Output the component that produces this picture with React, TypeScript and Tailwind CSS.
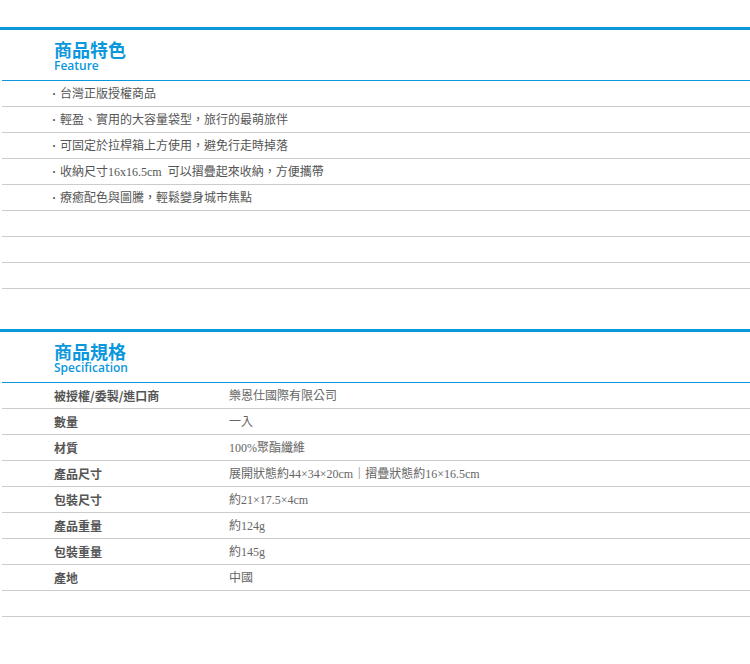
import React from 'react';

const features = [
    '台灣正版授權商品',
    '輕盈、實用的大容量袋型，旅行的最萌旅伴',
    '可固定於拉桿箱上方使用，避免行走時掉落',
    '收納尺寸16x16.5cm  可以摺疊起來收納，方便攜帶',
    '療癒配色與圖騰，輕鬆變身城市焦點',
    '',
    '',
    '',
];

const specs: [string, string][] = [
    ['被授權/委製/進口商', '樂恩仕國際有限公司'],
    ['數量', '一入'],
    ['材質', '100%聚酯纖維'],
    ['產品尺寸', '展開狀態約44×34×20cm｜摺疊狀態約16×16.5cm'],
    ['包裝尺寸', '約21×17.5×4cm'],
    ['產品重量', '約124g'],
    ['包裝重量', '約145g'],
    ['產地', '中國'],
    ['', ''],
];

const bodyFont = { fontFamily: '"Liberation Serif", "Noto Sans CJK TC", serif' };

const SectionHead = ({ zh, en }: { zh: string; en: string }) => (
    <div className="border-t-[3px] border-[#0a97dc]">
        <div className="ml-[2px] h-[51px] border-b border-[#0a97dc] pl-[52px] pt-[9px] flex flex-col gap-[1px]">
            <div className="text-[18px] leading-[20px] font-bold text-[#0a97dc]" style={{ fontFamily: '"Noto Sans CJK TC", sans-serif' }}>{zh}</div>
            <div className="text-[12px] leading-[12px] font-semibold text-[#0a97dc]" style={{ fontFamily: '"Open Sans", "Noto Sans", sans-serif' }}>{en}</div>
        </div>
    </div>
);

export default function App() {
    return (
        <div className="w-[750px] h-[664px] bg-white pt-[27px] overflow-hidden">
            <SectionHead zh="商品特色" en="Feature" />
            <div className="ml-[2px]">
                {features.map((f, i) => (
                    <div key={i} className="h-[26px] border-b border-[#cccccc] flex items-center pl-[50px] text-[12px] text-[#555555]" style={bodyFont}>
                        {f && <span className="whitespace-pre"><span className="mr-[4px] font-bold">·</span>{f}</span>}
                    </div>
                ))}
            </div>

            <div className="mt-[40px]">
                <SectionHead zh="商品規格" en="Specification" />
                <div className="ml-[2px]">
                    {specs.map(([k, v], i) => (
                        <div key={i} className="h-[26px] border-b border-[#cccccc] grid grid-cols-[227px_1fr] items-center text-[12px]" style={bodyFont}>
                            <span className="pl-[52px] font-bold text-[#555555]" style={{ fontFamily: '"Noto Sans CJK TC", sans-serif' }}>{k}</span>
                            <span className="text-[#666666]">{v}</span>
                        </div>
                    ))}
                </div>
            </div>
        </div>
    );
}
